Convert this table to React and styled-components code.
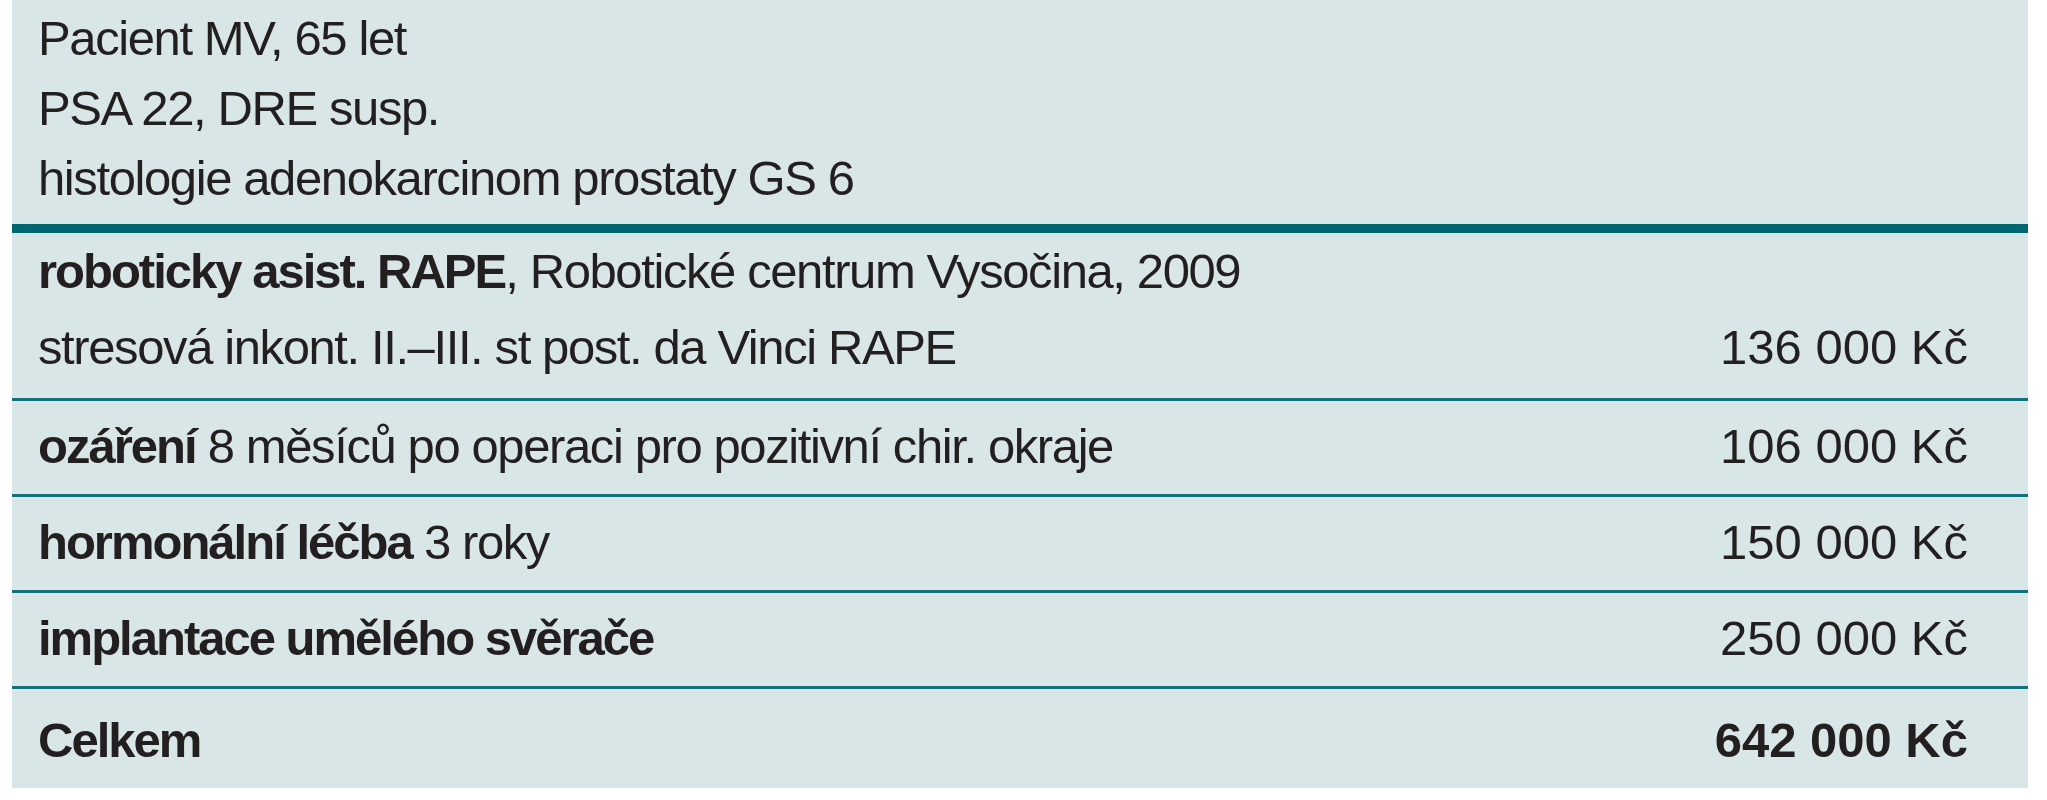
import React from "react";
import styled, { createGlobalStyle } from "styled-components";

const GlobalStyle = createGlobalStyle`
  html, body { margin: 0; padding: 0; background: #ffffff; }
  body { font-family: "Liberation Sans", Arial, sans-serif; }
`;

const Page = styled.div`
  padding: 0 19px 12px 12px;
`;

const Panel = styled.section`
  background: #d9e6e8;
  color: #231f20;
  font-family: "Liberation Sans", Arial, sans-serif;
  font-size: 49px;
  letter-spacing: -1.4px;
`;

const Header = styled.div`
  padding: 3px 60px 11px 26px;
  line-height: 70px;
  border-bottom: 9px solid #00666f;
`;

const Line = styled.div``;

const Row = styled.div`
  display: flex;
  align-items: flex-end;
  justify-content: space-between;
  gap: 40px;
  padding: ${(p) => (p.$multi ? "0 60px 13px 26px" : "7px 60px 10px 26px")};
  line-height: 76px;
  border-bottom: ${(p) => (p.$last ? "none" : "3px solid #11707a")};
  min-height: ${(p) => (p.$last ? "82px" : "auto")};
`;

const Label = styled.div`
  display: flex;
  flex-direction: column;
`;

const Strong = styled.b`
  font-weight: 700;
  letter-spacing: -2px;
`;

const Amount = styled.div`
  white-space: nowrap;
  text-align: right;
  letter-spacing: 0;
  font-weight: ${(p) => (p.$bold ? 700 : 400)};
`;

export default function App() {
  return (
    <>
      <GlobalStyle />
      <Page>
        <Panel>
          <Header>
            <Line>Pacient MV, 65 let</Line>
            <Line>PSA 22, DRE susp.</Line>
            <Line>histologie adenokarcinom prostaty GS 6</Line>
          </Header>
          <Row $multi>
            <Label>
              <Line>
                <Strong>roboticky asist. RAPE</Strong>, Robotické centrum Vysočina, 2009
              </Line>
              <Line>stresová inkont. II.–III. st post. da Vinci RAPE</Line>
            </Label>
            <Amount>136 000 Kč</Amount>
          </Row>
          <Row>
            <Label>
              <Line>
                <Strong>ozáření</Strong> 8 měsíců po operaci pro pozitivní chir. okraje
              </Line>
            </Label>
            <Amount>106 000 Kč</Amount>
          </Row>
          <Row>
            <Label>
              <Line>
                <Strong>hormonální léčba</Strong> 3 roky
              </Line>
            </Label>
            <Amount>150 000 Kč</Amount>
          </Row>
          <Row>
            <Label>
              <Line>
                <Strong>implantace umělého svěrače</Strong>
              </Line>
            </Label>
            <Amount>250 000 Kč</Amount>
          </Row>
          <Row $last>
            <Label>
              <Line>
                <Strong>Celkem</Strong>
              </Line>
            </Label>
            <Amount $bold>642 000 Kč</Amount>
          </Row>
        </Panel>
      </Page>
    </>
  );
}
